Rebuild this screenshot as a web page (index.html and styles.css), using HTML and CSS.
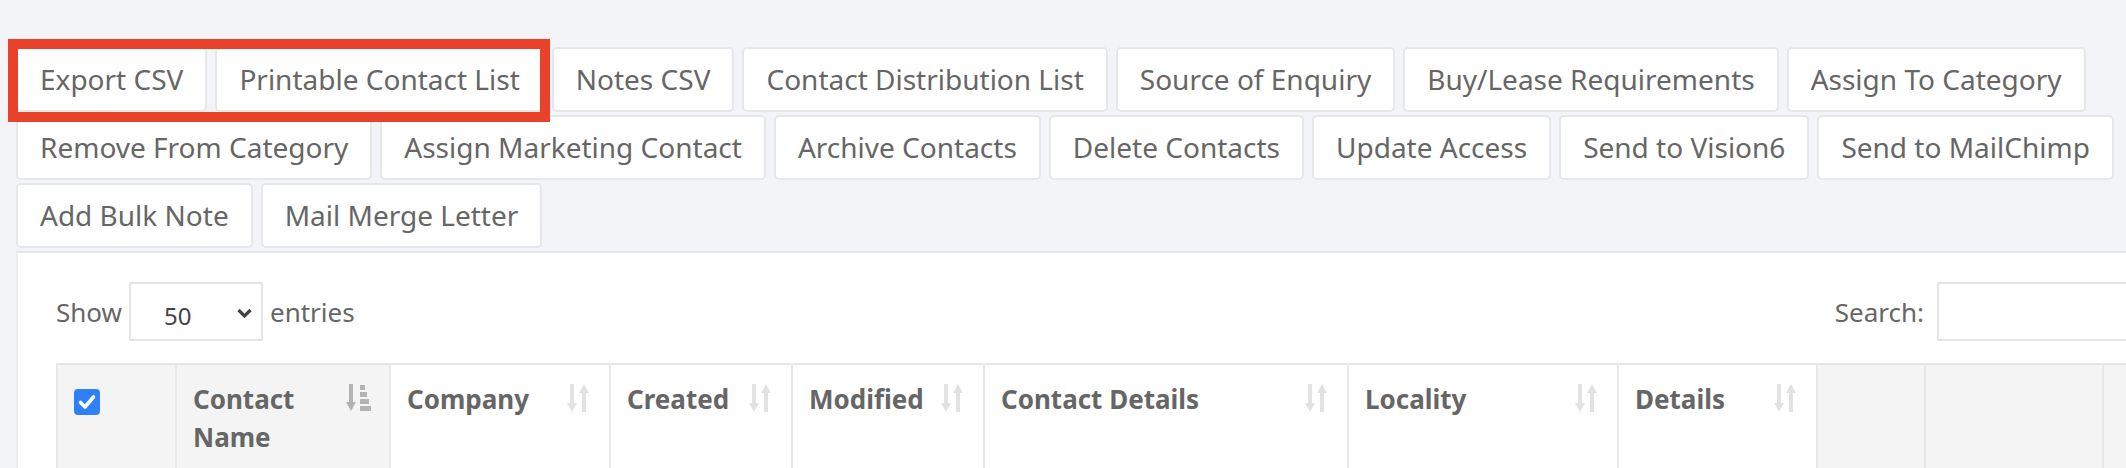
FILE: index.html
```html
<!DOCTYPE html>
<html lang="en">
  <head>
    <meta charset="UTF-8" />
    <meta name="viewport" content="width=device-width, initial-scale=1.0" />
    <title>Contacts</title>
    <link rel="stylesheet" href="styles.css">
  </head>
  <body>
    <div class="page">
      <div class="toolbar">
        <button class="dt-btn">Export CSV</button>
        <button class="dt-btn">Printable Contact List</button>
        <button class="dt-btn">Notes CSV</button>
        <button class="dt-btn">Contact Distribution List</button>
        <button class="dt-btn">Source of Enquiry</button>
        <button class="dt-btn">Buy/Lease Requirements</button>
        <button class="dt-btn">Assign To Category</button>
        <button class="dt-btn">Remove From Category</button>
        <button class="dt-btn">Assign Marketing Contact</button>
        <button class="dt-btn">Archive Contacts</button>
        <button class="dt-btn">Delete Contacts</button>
        <button class="dt-btn">Update Access</button>
        <button class="dt-btn">Send to Vision6</button>
        <button class="dt-btn">Send to MailChimp</button>
        <button class="dt-btn">Add Bulk Note</button>
        <button class="dt-btn">Mail Merge Letter</button>
      </div>

      <div class="card">
        <div class="controls">
          <label class="length">
            Show
            <span class="select-wrap">
              <select class="select">
                <option>10</option>
                <option>25</option>
                <option selected>50</option>
                <option>100</option>
              </select>
              <svg class="chevron" viewBox="0 0 16 12"><path d="M2 3l6 6 6-6" fill="none" stroke="#444" stroke-width="3.2"/></svg>
            </span>
            entries
          </label>
          <label class="search">
            Search:
            <input type="search" class="search-input" />
          </label>
        </div>

        <table class="contacts">
          <colgroup>
            <col style="width:119px" />
            <col style="width:214px" />
            <col style="width:220px" />
            <col style="width:182px" />
            <col style="width:192px" />
            <col style="width:364px" />
            <col style="width:270px" />
            <col style="width:199px" />
            <col style="width:108px" />
            <col style="width:178px" />
            <col style="width:120px" />
          </colgroup>
          <thead>
            <tr>
              <th class="shade">
                <span class="check">
                  <svg viewBox="0 0 26 26"><path d="M6.5 13.5l4.5 4.5 8.5-10" fill="none" stroke="#fff" stroke-width="3.6" stroke-linecap="round" stroke-linejoin="round"/></svg>
                </span>
              </th>
              <th class="shade">
                <div class="th-inner">
                  <span>Contact Name</span>
                  <svg class="sort" viewBox="0 0 26 28">
                    <g fill="#b3b3b3">
                      <rect x="3" y="0" width="4" height="19" />
                      <path d="M0 18h10l-5 9z" />
                      <rect x="14" y="1" width="5" height="5" />
                      <rect x="14" y="8" width="7" height="5" />
                      <rect x="14" y="15" width="9" height="5" />
                      <rect x="14" y="22" width="11" height="5" />
                    </g>
                  </svg>
                </div>
              </th>
              <th><div class="th-inner"><span>Company</span><svg class="sort" viewBox="0 0 26 28"><g fill="#e2e2e2"><rect x="4" y="0" width="4" height="20" /><path d="M1 19h10l-5 9z" /><path d="M13 9h10l-5-9z" /><rect x="16" y="8" width="4" height="20" /></g></svg></div></th>
              <th><div class="th-inner"><span>Created</span><svg class="sort" viewBox="0 0 26 28"><g fill="#e2e2e2"><rect x="4" y="0" width="4" height="20" /><path d="M1 19h10l-5 9z" /><path d="M13 9h10l-5-9z" /><rect x="16" y="8" width="4" height="20" /></g></svg></div></th>
              <th><div class="th-inner"><span>Modified</span><svg class="sort" viewBox="0 0 26 28"><g fill="#e2e2e2"><rect x="4" y="0" width="4" height="20" /><path d="M1 19h10l-5 9z" /><path d="M13 9h10l-5-9z" /><rect x="16" y="8" width="4" height="20" /></g></svg></div></th>
              <th><div class="th-inner"><span>Contact Details</span><svg class="sort" viewBox="0 0 26 28"><g fill="#e2e2e2"><rect x="4" y="0" width="4" height="20" /><path d="M1 19h10l-5 9z" /><path d="M13 9h10l-5-9z" /><rect x="16" y="8" width="4" height="20" /></g></svg></div></th>
              <th><div class="th-inner"><span>Locality</span><svg class="sort" viewBox="0 0 26 28"><g fill="#e2e2e2"><rect x="4" y="0" width="4" height="20" /><path d="M1 19h10l-5 9z" /><path d="M13 9h10l-5-9z" /><rect x="16" y="8" width="4" height="20" /></g></svg></div></th>
              <th><div class="th-inner"><span>Details</span><svg class="sort" viewBox="0 0 26 28"><g fill="#e2e2e2"><rect x="4" y="0" width="4" height="20" /><path d="M1 19h10l-5 9z" /><path d="M13 9h10l-5-9z" /><rect x="16" y="8" width="4" height="20" /></g></svg></div></th>
              <th class="shade"></th>
              <th class="shade"></th>
              <th class="shade"></th>
            </tr>
          </thead>
        </table>
      </div>
    </div>

    <!-- annotation box round the first two export buttons -->
    <div class="highlight"></div>
  </body>
</html>
```

FILE: styles.css
```css
body {
  margin: 0;
  background-color: #f3f4f8;
  font-family: "Noto Sans", "Open Sans", sans-serif;
  color: #666;
  overflow: hidden;
}

.page {
  padding: 47px 0 0 16px;
}

.toolbar {
  display: flex;
  flex-wrap: wrap;
  gap: 3px 8px;
  width: 2110px;
}

.dt-btn {
  font-family: inherit;
  font-size: 28px;
  line-height: 37px;
  color: #666;
  background-color: #fff;
  border: 2px solid #e6e7ea;
  border-radius: 5px;
  padding: 12px 22px;
  margin: 0;
}

.card {
  width: 2209px;
  box-sizing: border-box;
  margin-top: 3px;
  padding: 29px 38px 0;
  background-color: #fff;
  border-top: 2px solid #e6e7ea;
  border-left: 2px solid #eceef1;
  height: 300px;
  overflow: hidden;
}

.controls {
  display: flex;
  justify-content: space-between;
  align-items: center;
  font-size: 26px;
}

.length,
.search {
  display: flex;
  align-items: center;
  gap: 7px;
}

.select-wrap {
  position: relative;
  display: inline-block;
}

.select {
  appearance: none;
  width: 134px;
  height: 59px;
  box-sizing: border-box;
  border: 2px solid #e5e5e5;
  border-radius: 0;
  background-color: #fff;
  font-family: inherit;
  font-size: 24px;
  color: #444;
  padding: 8px 0 0 33px;
}

.chevron {
  position: absolute;
  right: 10px;
  top: 25px;
  width: 17px;
  height: 12px;
  pointer-events: none;
}

.search {
  gap: 13px;
}

.search-input {
  width: 250px;
  height: 59px;
  box-sizing: border-box;
  border: 2px solid #e5e5e5;
  border-radius: 0;
  margin: 0;
}

.contacts {
  margin-top: 22px;
  table-layout: fixed;
  border-collapse: collapse;
  width: 2048px;
  border-top: 2px solid #e6e6e6;
}

.contacts th {
  height: 140px;
  vertical-align: top;
  text-align: left;
  font-size: 26px;
  line-height: 38px;
  font-weight: 700;
  color: #666;
  padding: 15px 16px 0;
  border-left: 2px solid #e8e8e8;
  background-color: #fff;
}

.contacts th.shade {
  background-color: #f4f4f4;
}

.th-inner {
  display: flex;
  justify-content: space-between;
  align-items: flex-start;
  gap: 8px;
}

.sort {
  flex: none;
  width: 26px;
  height: 28px;
  margin-top: 4px;
  margin-right: 1px;
}

.check {
  display: block;
  width: 26px;
  height: 26px;
  margin-top: 9px;
  border-radius: 4px;
  background-color: #2f7ff6;
}

.check svg {
  display: block;
  width: 26px;
  height: 26px;
}

.highlight {
  position: absolute;
  left: 8px;
  top: 39px;
  width: 542px;
  height: 83px;
  box-sizing: border-box;
  border: 10px solid #e9412a;
}
```
